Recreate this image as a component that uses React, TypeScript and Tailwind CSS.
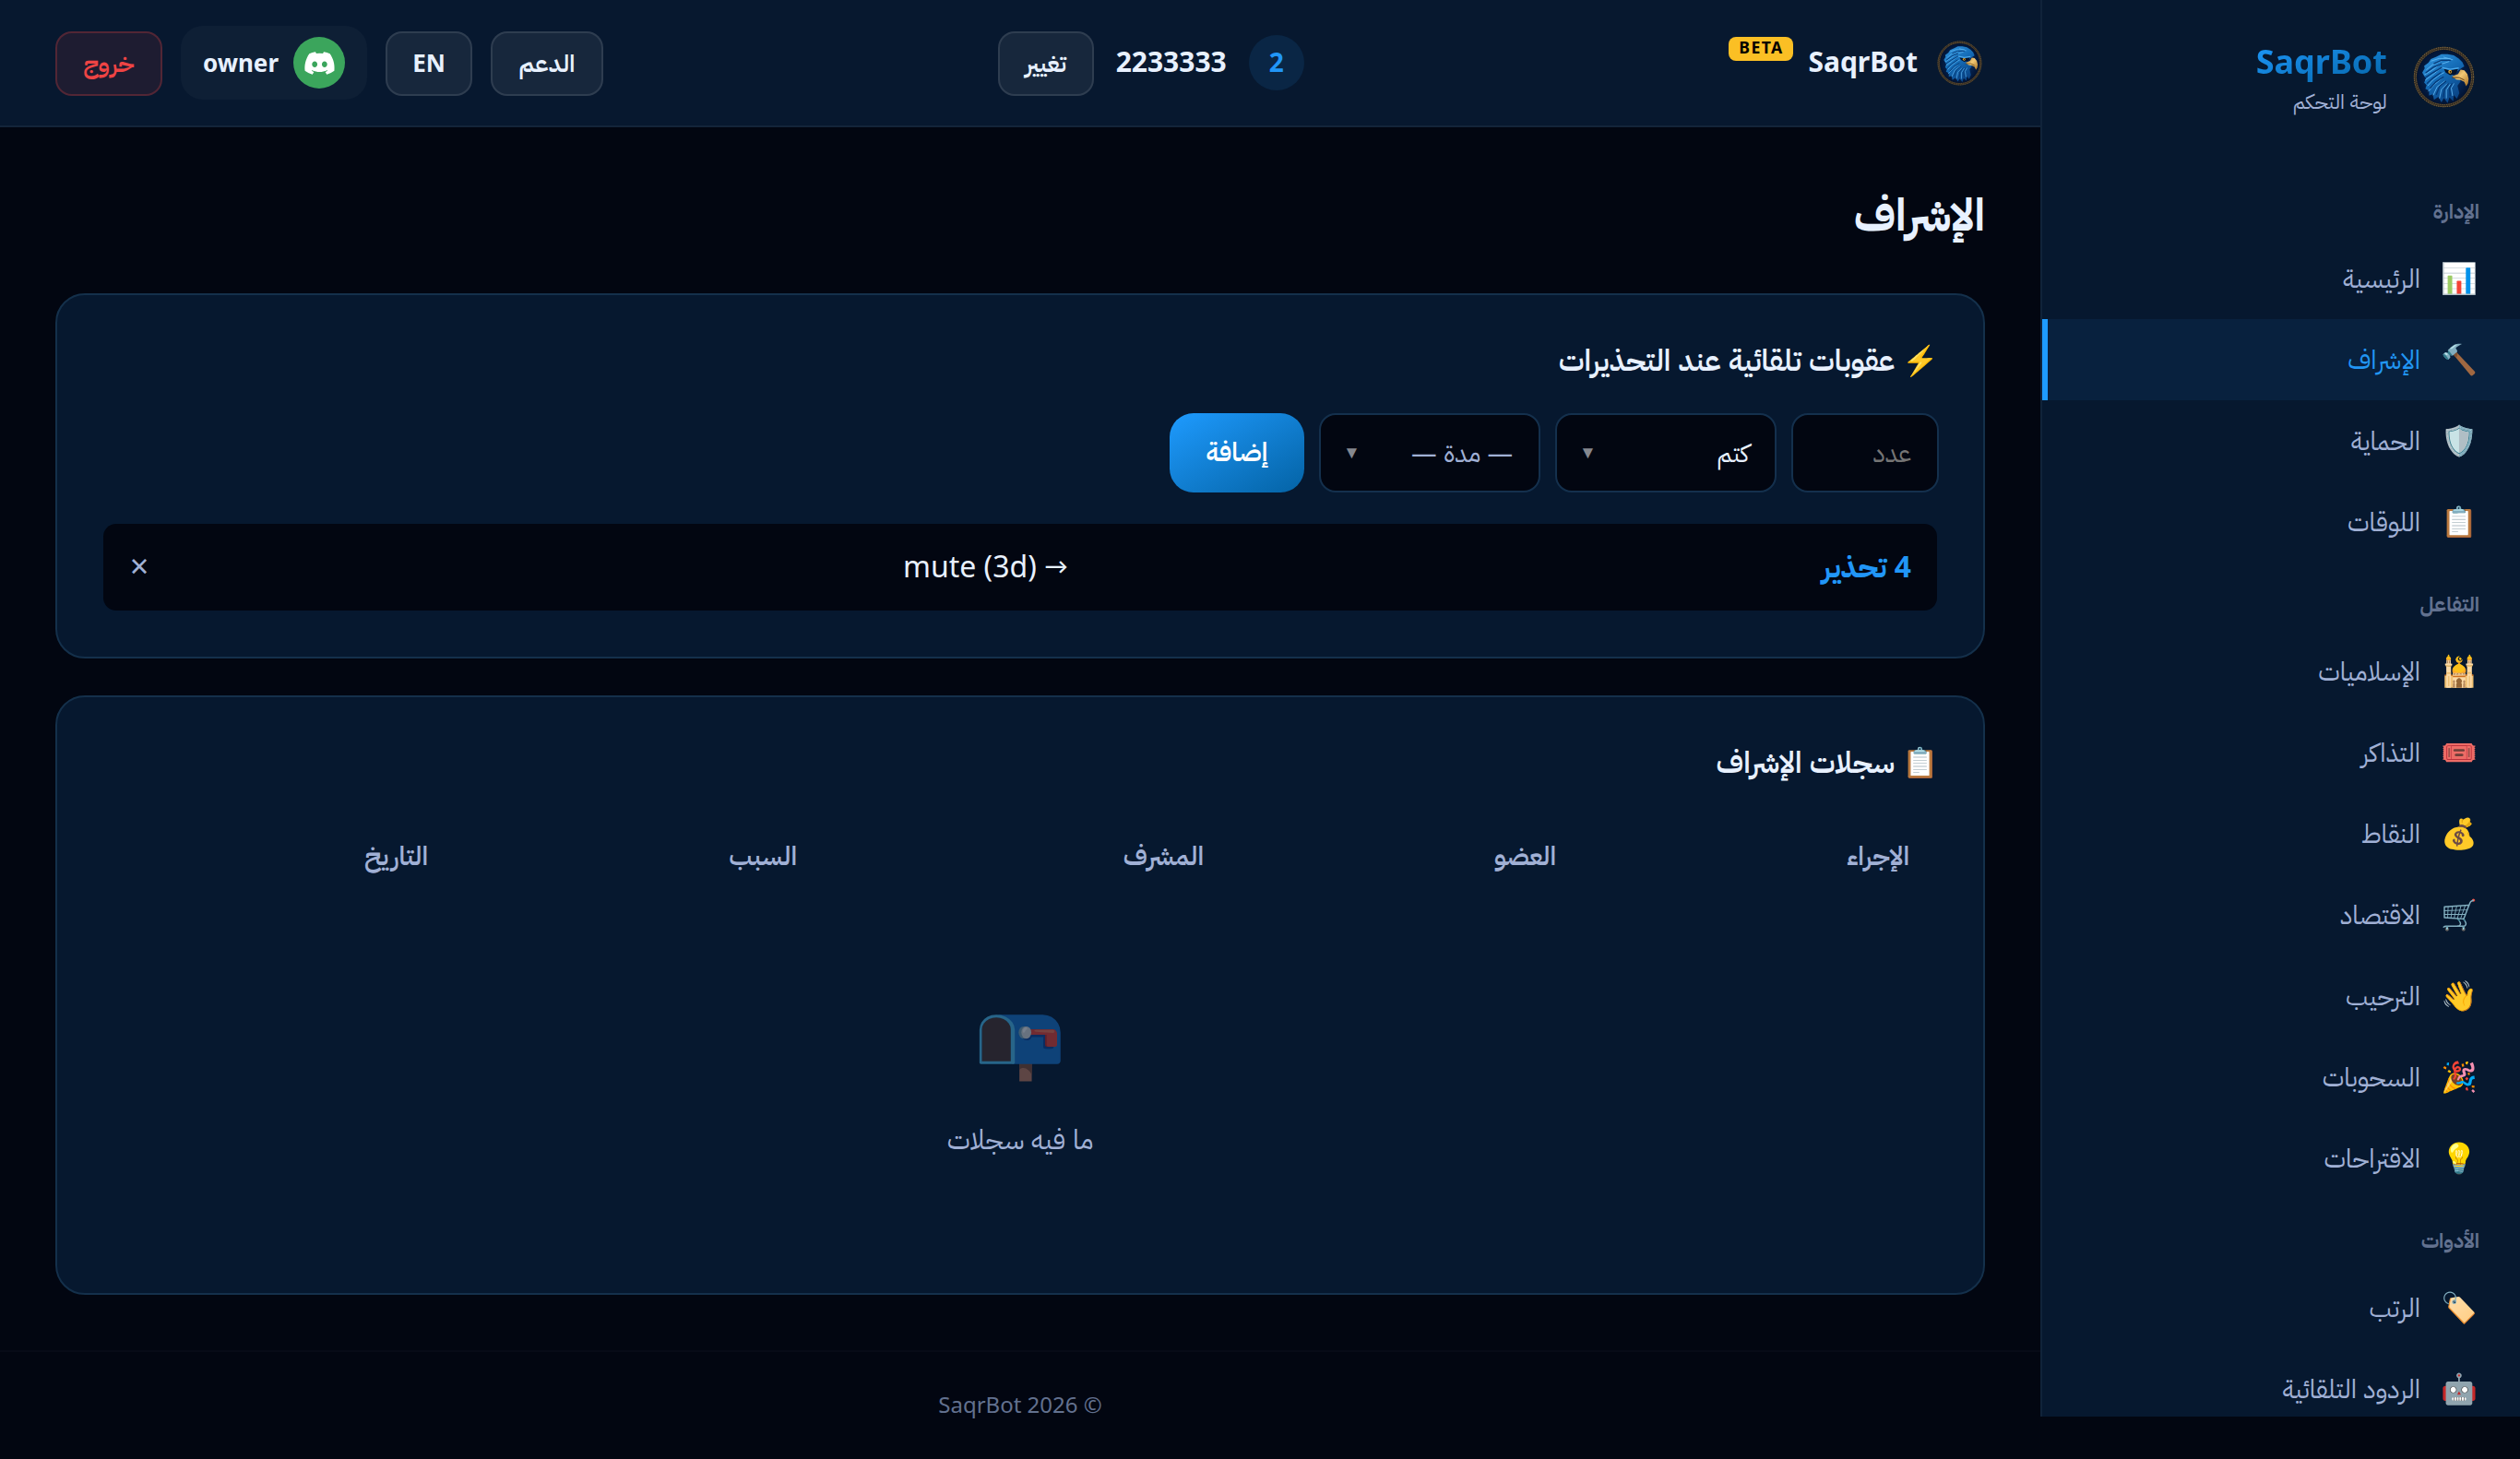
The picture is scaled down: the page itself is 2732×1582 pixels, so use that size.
import React from "react";
import { FaDiscord } from "react-icons/fa";

type Item = { icon: string; label: string; active?: boolean };
type Group = { title: string; items: Item[] };

const groups: Group[] = [
  {
    title: "الإدارة",
    items: [
      { icon: "📊", label: "الرئيسية" },
      { icon: "🔨", label: "الإشراف", active: true },
      { icon: "🛡️", label: "الحماية" },
      { icon: "📋", label: "اللوقات" },
    ],
  },
  {
    title: "التفاعل",
    items: [
      { icon: "🕌", label: "الإسلاميات" },
      { icon: "🎟️", label: "التذاكر" },
      { icon: "💰", label: "النقاط" },
      { icon: "🛒", label: "الاقتصاد" },
      { icon: "👋", label: "الترحيب" },
      { icon: "🎉", label: "السحوبات" },
      { icon: "💡", label: "الاقتراحات" },
    ],
  },
  {
    title: "الأدوات",
    items: [
      { icon: "🏷️", label: "الرتب" },
      { icon: "🤖", label: "الردود التلقائية" },
    ],
  },
];

/* Falcon head inside a braided bronze ring */
function FalconLogo({ className, id }: { className: string; id: string }) {
  return (
    <svg viewBox="0 0 100 100" className={className} aria-hidden="true">
      <defs>
        <radialGradient id={`${id}-bg`}>
          <stop offset="0.5" stopColor="#04275a" />
          <stop offset="1" stopColor="#02102b" />
        </radialGradient>
        <linearGradient id={`${id}-head`} x1="0" y1="0" x2="0.6" y2="1">
          <stop offset="0" stopColor="#3498e0" />
          <stop offset="0.5" stopColor="#156db8" />
          <stop offset="1" stopColor="#0a4486" />
        </linearGradient>
        <linearGradient id={`${id}-beak`} x1="0" y1="0" x2="1" y2="1">
          <stop offset="0" stopColor="#a87a34" />
          <stop offset="0.45" stopColor="#f2c874" />
          <stop offset="1" stopColor="#a86f20" />
        </linearGradient>
      </defs>
      <circle cx="50" cy="50" r="47" fill={`url(#${id}-bg)`} />
      <circle cx="50" cy="50" r="46.5" fill="none" stroke="#332b22" strokeWidth="5" />
      <circle cx="50" cy="50" r="48" fill="none" stroke="#77643f" strokeWidth="1.6" strokeDasharray="2 1.6" />
      <circle cx="50" cy="50" r="45" fill="none" stroke="#77643f" strokeWidth="1.4" strokeDasharray="2 1.6" />
      <path
        d="M15 43l4-7-1-4 7-5 4-6 9-4 8-4 10 0 10 2 8 5 6 6 3 7-5 3-5 4-9 3 1 5 9 2 3 7-5 7 3 12-4 9-5-6-1 10-6-6-3 9-6-8-4 7-5-9-7 5-2-9-6 2 0-8-6-3 2-6-4-4 3-6-3-5z"
        fill={`url(#${id}-head)`}
      />
      <path
        d="M22 38l10-8 14-6 M19 46l12-7 12-9 15-5 M20 55l11-8 11-9 6-3 M24 64l8-9 12-9 6-3 M25 73l10-11 12-10 M33 79l6-13 12-9 M43 84l3-14 9-9 M54 84l0-13 6-9 M64 80l-2-12 4-7 M30 24l12-4 18 0 M50 18l14 4"
        fill="none"
        stroke="#62b9f5"
        strokeWidth="1.3"
        strokeLinecap="round"
      />
      <path
        d="M21 43l12-9 13-5 M20 51l12-8 14-8 M23 60l9-8 13-9 M28 68l9-10 12-8 M38 78l5-13 10-8 M49 82l2-13 6-8 M60 80l-1-12 4-7 M34 28l12-5 14 0"
        fill="none"
        stroke="#063a78"
        strokeWidth="2"
        strokeLinecap="round"
      />
      <path d="M50 37l9 2 14-2-4 8-9 2-7-4z" fill="#04142c" />
      <circle cx="60" cy="41.5" r="2.9" fill="#e0a531" />
      <circle cx="60.5" cy="41.5" r="1.3" fill="#120b04" />
      <path d="M48 35l12 2.5 14-2" fill="none" stroke="#4aa9ec" strokeWidth="2.2" />
      <path d="M63 49l10-4 4-7 6 1 5 6 2 8-1 7-3 5-3-7-6-3-7-1z" fill={`url(#${id}-beak)`} />
      <path d="M63 51l12 0 8 4" fill="none" stroke="#5b3a10" strokeWidth="1.4" />
    </svg>
  );
}

function GhostButton({ children, className }: { children: React.ReactNode; className: string }) {
  return (
    <button
      className={`flex h-[70px] items-center justify-center rounded-[18px] border-2 border-white/10 bg-white/[0.065] pb-[3px] text-[26px] leading-none text-[#e8f1ff] ${className}`}
    >
      {children}
    </button>
  );
}

function Sidebar() {
  return (
    <aside className="h-[1536px] w-[520px] shrink-0 overflow-hidden border-l-2 border-[#10233a] bg-[#06182f]">
      <div className="flex h-[184px] items-start gap-[28px] pt-[42px] pr-[49px]">
        <FalconLogo id="side" className="mt-[8px] size-[67px]" />
        <div>
          <div className="bg-gradient-to-br from-[#1e9bff] to-[#0463a5] bg-clip-text text-[36px] leading-[50px] font-bold text-transparent">
            SaqrBot
          </div>
          <div className="-mt-[2px] text-[22px] leading-[38px] text-[#a0b0d5]">لوحة التحكم</div>
        </div>
      </div>
      <nav>
        {groups.map((g) => (
          <div key={g.title}>
            <div className="flex h-[74px] items-end pr-[44px] pb-[17px] text-[22px] leading-[26px] font-bold text-[#62718f]">
              {g.title}
            </div>
            {g.items.map((it) => (
              <a
                key={it.label}
                className={`flex h-[88px] items-center gap-[18px] pr-[42px] text-[28px] leading-none ${
                  it.active
                    ? "border-l-[6px] border-[#1e9bff] bg-[#08213e] text-[#2196f3]"
                    : "text-[#a0b0d5]"
                }`}
              >
                <span className="flex w-[48px] justify-center pb-[3px] text-[32px] leading-none">{it.icon}</span>
                <span className="pb-[2px]">{it.label}</span>
              </a>
            ))}
          </div>
        ))}
      </nav>
    </aside>
  );
}

function Header() {
  return (
    <header className="flex h-[138px] items-center justify-between border-b-2 border-[#13243a] bg-[#07182f] px-[60px]">
      <div className="flex items-center">
        <div className="flex w-[56px] justify-center">
          <FalconLogo id="top" className="size-[49px]" />
        </div>
        <span className="mr-[17px] pb-[2px] text-[30px] leading-none font-bold text-[#e8f1ff]">SaqrBot</span>
        <span
          dir="ltr"
          className="mr-[16px] mb-[30px] flex h-[26px] w-[70px] items-center justify-center rounded-[8px] bg-[#fbbf24] pb-[2px] text-[17.6px] leading-none font-bold tracking-[1.4px] text-black"
        >
          BETA
        </span>
      </div>
      <div className="mr-[33px] flex items-center">
        <div className="flex size-[60px] items-center justify-center rounded-full bg-[#0a2645] pb-[2px] text-[28px] leading-none font-bold text-[#2196f8]">
          2
        </div>
        <span className="mr-[24px] ml-[24px] pb-[2px] text-[30px] leading-none font-bold text-[#e8f1ff]">2233333</span>
        <GhostButton className="mt-[2px] w-[104px] font-semibold">تغيير</GhostButton>
      </div>
      <div className="flex items-center gap-[20px]">
        <GhostButton className="mt-[2px] w-[122px] font-semibold">الدعم</GhostButton>
        <GhostButton className="mt-[2px] w-[94px] font-bold">EN</GhostButton>
        <div className="flex h-[80px] w-[202px] items-center gap-[16px] rounded-[24px] bg-white/[0.03] pr-[24px]">
          <span className="flex size-[56px] items-center justify-center rounded-full bg-[#3ba55c]">
            <FaDiscord className="size-[35px] text-white" />
          </span>
          <span className="text-[26px] leading-none font-bold text-[#e8f1ff]">owner</span>
        </div>
        <button className="mt-[2px] flex h-[70px] w-[116px] items-center justify-center rounded-[18px] border-2 border-[#ef4444]/25 bg-[#ef4444]/10 pb-[3px] text-[26px] leading-none font-semibold text-[#ef4444]">
          خروج
        </button>
      </div>
    </header>
  );
}

function Select({ value, muted }: { value: string; muted?: boolean }) {
  return (
    <div className="flex h-[86px] w-[240px] items-center justify-between rounded-[18px] border-2 border-[#14304d] bg-[#020611] pr-[28px] pb-px pl-[24px] leading-none">
      <span className={muted ? "text-[27.6px] text-[#a0b0d5]" : "text-[27px] text-[#e8f1ff]"}>{value}</span>
      <span className="text-[19px] text-[#85888f]">▼</span>
    </div>
  );
}

function Card({ title, children, className }: { title: string; children: React.ReactNode; className: string }) {
  return (
    <section className={`rounded-[32px] border-2 border-[#14304b] bg-[#06182f] p-[48px] ${className}`}>
      <h2 className="mb-[37px] text-[31.8px] leading-[43px] font-semibold text-[#e8f1ff]">{title}</h2>
      {children}
    </section>
  );
}

export default function App() {
  return (
    <div
      dir="rtl"
      className="flex h-[1582px] w-full items-start overflow-hidden bg-[#020611] font-['Noto_Sans','IBM_Plex_Sans_Arabic','Noto_Color_Emoji',sans-serif]"
    >
      <Sidebar />
      <div className="flex min-w-0 flex-1 flex-col">
        <Header />
        <main className="px-[60px] pt-[61px]">
          <h1 className="mb-[53px] text-[48px] leading-[66px] font-bold text-[#e8f1ff]">الإشراف</h1>
          <Card title="⚡ عقوبات تلقائية عند التحذيرات" className="h-[396px]">
            <div className="flex gap-[16px]">
              <div className="flex h-[86px] w-[160px] items-center rounded-[18px] border-2 border-[#14304d] bg-[#020611] pr-[28px] pb-[2px] text-[28px] leading-none text-[#757575]">
                عدد
              </div>
              <Select value="كتم" />
              <Select value="— مدة —" muted />
              <button className="h-[86px] w-[146px] rounded-[26px] bg-gradient-to-br from-[#1e9bff] to-[#0463a5] pb-[4px] text-[28px] leading-none font-semibold text-white">
                إضافة
              </button>
            </div>
            <div className="mt-[32px] flex h-[98px] items-center justify-between rounded-[16px] border-2 border-transparent bg-[#020611] bg-clip-padding px-[28px] pb-[2px] text-[32px] leading-none text-[#e8f1ff]">
              <span className="text-[31.8px] font-bold text-[#2196f8]">4 تحذير</span>
              <span>→ mute (3d)</span>
              <button className="w-[22px] text-[36px] leading-none text-[#a0b0d5]">×</button>
            </div>
          </Card>
          <Card title="📋 سجلات الإشراف" className="mt-[40px] h-[650px]">
            <table className="w-full table-fixed">
              <colgroup>
                <col className="w-[383px]" />
                <col className="w-[382px]" />
                <col className="w-[441px]" />
                <col className="w-[400px]" />
                <col />
              </colgroup>
              <thead>
                <tr className="h-[86px] text-right text-[28px] leading-none text-[#a0b0d5]">
                  {["الإجراء", "العضو", "المشرف", "السبب", "التاريخ"].map((h) => (
                    <th key={h} className="pr-[32px] font-semibold">
                      {h}
                    </th>
                  ))}
                </tr>
              </thead>
            </table>
            <div className="flex flex-col items-center pt-[115px]">
              <div className="h-[80px] text-[80px] leading-[80px] opacity-45">📭</div>
              <p className="mt-[48px] text-[29.8px] leading-[44px] text-[#a0b0d5]">ما فيه سجلات</p>
            </div>
          </Card>
        </main>
        <footer className="mt-[60px] border-t-2 border-[#070b17] pt-[37px] text-center text-[24px] leading-[40px] text-[#62718f]">
          © 2026 SaqrBot
        </footer>
      </div>
    </div>
  );
}
